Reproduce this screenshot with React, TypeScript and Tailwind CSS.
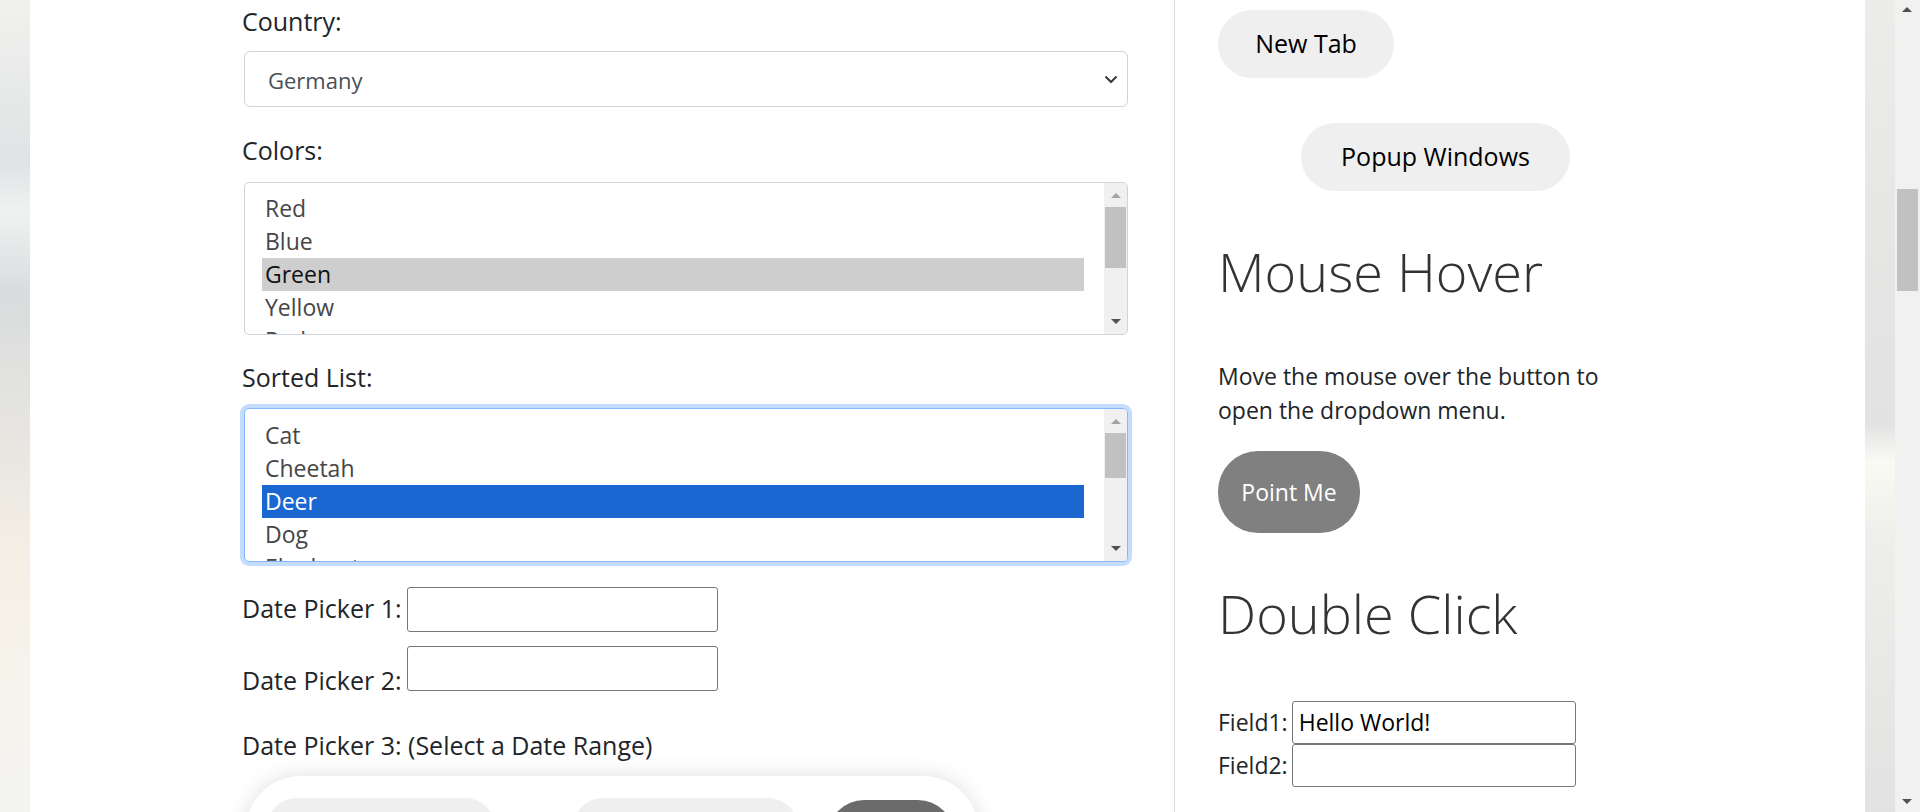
import React from "react";

type ListProps = {
  items: string[];
  selected: number;
  focused?: boolean;
  thumbTop: number;
  thumbHeight: number;
};

function ScrollArrows({ thumbTop, thumbHeight }: { thumbTop: number; thumbHeight: number }) {
  return (
    <div className="relative w-[23px] flex-none bg-[#f0f0f0]">
      <div className="absolute left-[7px] top-[10px] h-0 w-0 border-x-[5px] border-b-[5px] border-x-transparent border-b-[#a3a3a3]" />
      <div
        className="absolute left-[1px] w-[21px] bg-[#c1c1c1]"
        style={{ top: thumbTop, height: thumbHeight }}
      />
      <div className="absolute bottom-[10px] left-[7px] h-0 w-0 border-x-[5px] border-t-[5px] border-x-transparent border-t-[#505050]" />
    </div>
  );
}

function ListBox({ items, selected, focused, thumbTop, thumbHeight }: ListProps) {
  return (
    <div
      className={
        focused
          ? "flex h-[154px] overflow-hidden rounded-[5px] border border-[#86b7fe] bg-white shadow-[0_0_0_4px_#c4ddfc]"
          : "flex h-[153px] overflow-hidden rounded-[5px] border border-[#ced4da] bg-white"
      }
    >
      <div className={focused ? "flex-1 overflow-hidden pl-[17px] pr-[20px] pt-[10px]" : "flex-1 overflow-hidden pl-[17px] pr-[20px] pt-[9px]"}>
        {items.map((it, i) => (
          <div
            key={i}
            className={
              i === selected
                ? focused
                  ? "h-[33px] bg-[#1a67d2] pl-[3px] text-[23px] leading-[33px] text-white"
                  : "h-[33px] bg-[#cecece] pl-[3px] text-[23px] leading-[33px] text-[#111]"
                : "h-[33px] pl-[3px] text-[23px] leading-[33px] text-[#464646]"
            }
          >
            {it}
          </div>
        ))}
      </div>
      <ScrollArrows thumbTop={thumbTop} thumbHeight={thumbHeight} />
    </div>
  );
}

function LeftColumn() {
  return (
    <div className="w-[884px] flex-none">
      {/* Country */}
      <label className="-ml-[2px] mt-[5px] block text-[25px] leading-[33px] text-[#212529]">Country:</label>
      <div className="mt-[13px] flex h-[56px] items-center justify-between rounded-[6px] border border-[#ced4da] bg-white pl-[23px] pr-[8px] pt-[3px]">
        <span className="text-[22px] text-[#495057]">Germany</span>
        <svg width="14" height="9" viewBox="0 0 14 9" className="mb-[3px] mr-[1px]">
          <polyline points="1.5,1.5 7,7 12.5,1.5" fill="none" stroke="#343a40" strokeWidth="2" />
        </svg>
      </div>

      {/* Colors */}
      <label className="-ml-[2px] mt-[27px] block text-[25px] leading-[33px] text-[#212529]">Colors:</label>
      <div className="mt-[15px]">
        <ListBox items={["Red", "Blue", "Green", "Yellow", "Red"]} selected={2} thumbTop={24} thumbHeight={61} />
      </div>

      {/* Sorted */}
      <label className="-ml-[2px] mt-[26px] block text-[25px] leading-[33px] text-[#212529]">Sorted List:</label>
      <div className="mt-[14px]">
        <ListBox
          items={["Cat", "Cheetah", "Deer", "Dog", "Elephant"]}
          selected={2}
          focused
          thumbTop={24}
          thumbHeight={45}
        />
      </div>

      {/* Date pickers */}
      <div className="-ml-[2px] mt-[25px] flex items-end">
        <span className="mb-[7px] text-[25px] leading-[33px] text-[#212529]">Date Picker 1:</span>
        <div className="ml-[5px] h-[45px] w-[311px] rounded-[3px] border border-[#767676] bg-white" />
      </div>
      <div className="-ml-[2px] mt-[14px] flex items-end">
        <span className="mb-[-6px] text-[25px] leading-[33px] text-[#212529]">Date Picker 2:</span>
        <div className="ml-[5px] h-[45px] w-[311px] rounded-[3px] border border-[#767676] bg-white" />
      </div>
      <label className="-ml-[2px] mt-[38px] block text-[25px] leading-[33px] text-[#212529]">
        Date Picker 3: (Select a Date Range)
      </label>

      {/* Date range card */}
      <div className="ml-[1px] mt-[14px] h-[120px] w-[734px] rounded-[56px] bg-white pl-[22px] pt-[22px] shadow-[0_0_22px_rgba(0,0,0,0.13)]">
        <div className="flex items-start">
          <div className="h-[80px] w-[228px] rounded-[30px] bg-[#efefef]" />
          <div className="ml-[78px] h-[80px] w-[225px] rounded-[30px] bg-[#efefef]" />
          <div className="ml-[30px] mt-[2px] h-[80px] w-[126px] rounded-[36px] bg-[#6b6b6b]" />
        </div>
      </div>
    </div>
  );
}

function RightColumn() {
  return (
    <div className="flex-none">
      <button className="mt-[10px] block h-[68px] w-[176px] rounded-full bg-[#efefef] text-[25px] text-black">
        New Tab
      </button>
      <button className="ml-[83px] mt-[45px] block h-[68px] w-[269px] rounded-full bg-[#efefef] text-[25px] text-black">
        Popup Windows
      </button>
      <h2 className="mt-[49px] text-[54px] font-light leading-[63px] text-[#333]">Mouse Hover</h2>
      <p className="mt-[56px] w-[400px] text-[23px] leading-[34px] text-[#212529]">
        Move the mouse over the button to open the dropdown menu.
      </p>
      <button className="mt-[24px] block h-[82px] w-[142px] rounded-[40px] bg-[#808080] text-[23px] text-white">
        Point Me
      </button>
      <h2 className="mt-[49px] text-[54px] font-light leading-[63px] text-[#333]">Double Click</h2>
      <div className="mt-[56px] flex items-center">
        <span className="text-[23px] text-[#212529]">Field1:</span>
        <div className="ml-[4px] flex h-[43px] w-[284px] items-center rounded-[3px] border border-[#767676] bg-white pl-[6px] text-[23px] text-black">
          Hello World!
        </div>
      </div>
      <div className="flex items-center">
        <span className="text-[23px] text-[#212529]">Field2:</span>
        <div className="ml-[4px] h-[43px] w-[284px] rounded-[3px] border border-[#767676] bg-white" />
      </div>
    </div>
  );
}

export default function App() {
  return (
    <div className="flex h-[812px] w-[1920px] overflow-hidden bg-white font-['Open_Sans',sans-serif]">
      <div className="w-[30px] flex-none bg-[linear-gradient(180deg,#f1f2ef_0%,#e0e3e4_20%,#eef2f1_26%,#d9dcdd_36%,#e8e6e1_55%,#f4efe5_68%,#f7f4ed_85%,#f4f4f2_100%)]" />
      <div className="flex h-full flex-1 overflow-hidden bg-white pl-[214px]">
        <LeftColumn />
        <div className="ml-[46px] h-full w-px flex-none bg-[#dcdcdc]" />
        <div className="ml-[43px]">
          <RightColumn />
        </div>
      </div>
      <div className="w-[30px] flex-none bg-[linear-gradient(180deg,#ecece9_0%,#e6e6e5_30%,#e2e2e2_52%,#fafaf5_57%,#eeeeea_66%,#e2e2e2_100%)]" />
      <div className="relative w-[25px] flex-none bg-[#f1f1f1]">
        <div className="absolute left-[7px] top-[7px] h-0 w-0 border-x-[5px] border-b-[5px] border-x-transparent border-b-[#505050]" />
        <div className="absolute left-[2px] top-[189px] h-[102px] w-[21px] bg-[#c1c1c1]" />
        <div className="absolute bottom-[8px] left-[7px] h-0 w-0 border-x-[5px] border-t-[5px] border-x-transparent border-t-[#505050]" />
      </div>
    </div>
  );
}
